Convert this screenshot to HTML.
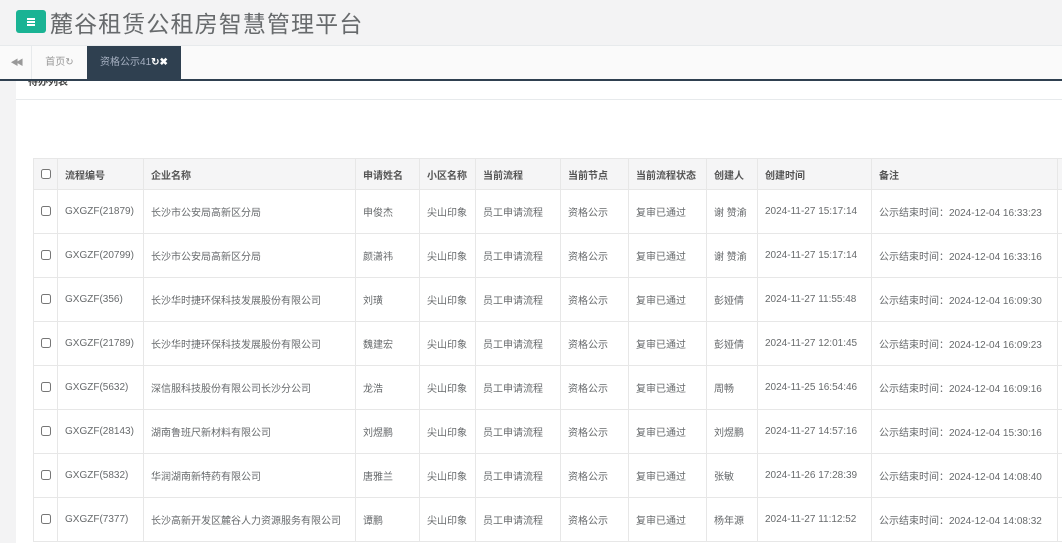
<!DOCTYPE html>
<html><head><meta charset="utf-8"><style>
*{margin:0;padding:0;box-sizing:border-box}
body{width:1062px;height:543px;overflow:hidden;background:#fff;font-family:"Liberation Sans","Noto Sans CJK SC",sans-serif;color:#676a6c;font-size:10px;position:relative}
.hdr{position:absolute;left:0;top:0;width:1062px;height:46px;background:#f3f3f4;border-bottom:1px solid #e7eaec}
.btn{position:absolute;left:16px;top:10px;width:30px;height:23px;background:#1ab394;border-radius:3px}
.btn i{position:absolute;left:11px;width:8px;height:2px;background:#fff}
.title{position:absolute;left:50px;top:5px;font-size:23px;color:#676a6c;letter-spacing:1.1px}
.tabs{position:absolute;left:0;top:46px;width:1062px;height:35px;background:#fafafa;border-bottom:2px solid #2f4050}
.tabs .a{position:absolute;left:0;top:0;width:32px;height:33px;border-right:1px solid #e7eaec;text-align:center;line-height:33px;color:#999;font-size:8px;letter-spacing:-3px}
.tabs .h{position:absolute;left:32px;top:0;width:55px;height:33px;line-height:33px;text-align:center;color:#999;font-size:10px}
.tabs .t{position:absolute;left:87px;top:0;width:94px;height:33px;line-height:33px;text-align:center;background:#2f4050;color:#a7b1c2;font-size:10px}
.left{position:absolute;left:0;top:81px;width:16px;height:462px;background:#f3f3f4}
.sub{position:absolute;left:28px;top:73px;font-size:10px;color:#444;font-weight:bold}
.line{position:absolute;left:16px;top:99px;width:1046px;height:1px;background:#e7eaec}
table{position:absolute;left:33px;top:158px;border-collapse:collapse;table-layout:fixed;width:1040px}
td,th{border:1px solid #e7e7e7;padding:0 7px;text-align:left;white-space:nowrap;overflow:hidden;font-size:10px;vertical-align:middle}
th{background:#f5f5f6;height:31px;color:#555;font-weight:bold}
td{height:44px;color:#676a6c}
input{width:10px;height:10px;margin:0;vertical-align:middle}
</style></head><body>
<div class="hdr"><div class="btn"><i style="top:8px"></i><i style="top:11px"></i><i style="top:14px"></i></div>
<div class="title">麓谷租赁公租房智慧管理平台</div></div>
<div class="tabs"><div class="a">◀◀</div><div class="h">首页↻</div><div class="t">资格公示41<b style="color:#fff">↻✖</b></div></div>
<div class="left"></div>
<div class="sub" style="clip-path:inset(8px 0 0 0)">待办列表</div>
<div class="line"></div>
<table>
<colgroup><col style="width:24px"><col style="width:86px"><col style="width:212px"><col style="width:64px"><col style="width:56px"><col style="width:85px"><col style="width:68px"><col style="width:78px"><col style="width:51px"><col style="width:114px"><col style="width:186px"><col style="width:16px"></colgroup>
<tr><th><input type="checkbox"></th><th>流程编号</th><th>企业名称</th><th>申请姓名</th><th>小区名称</th><th>当前流程</th><th>当前节点</th><th>当前流程状态</th><th>创建人</th><th>创建时间</th><th>备注</th><th></th></tr>
<tr><td><input type="checkbox"></td><td>GXGZF(21879)</td><td>长沙市公安局高新区分局</td><td>申俊杰</td><td>尖山印象</td><td>员工申请流程</td><td>资格公示</td><td>复审已通过</td><td>谢 赞渝</td><td>2024-11-27 15:17:14</td><td>公示结束时间：2024-12-04 16:33:23</td><td></td></tr>
<tr><td><input type="checkbox"></td><td>GXGZF(20799)</td><td>长沙市公安局高新区分局</td><td>颜潇祎</td><td>尖山印象</td><td>员工申请流程</td><td>资格公示</td><td>复审已通过</td><td>谢 赞渝</td><td>2024-11-27 15:17:14</td><td>公示结束时间：2024-12-04 16:33:16</td><td></td></tr>
<tr><td><input type="checkbox"></td><td>GXGZF(356)</td><td>长沙华时捷环保科技发展股份有限公司</td><td>刘璜</td><td>尖山印象</td><td>员工申请流程</td><td>资格公示</td><td>复审已通过</td><td>彭娅倩</td><td>2024-11-27 11:55:48</td><td>公示结束时间：2024-12-04 16:09:30</td><td></td></tr>
<tr><td><input type="checkbox"></td><td>GXGZF(21789)</td><td>长沙华时捷环保科技发展股份有限公司</td><td>魏建宏</td><td>尖山印象</td><td>员工申请流程</td><td>资格公示</td><td>复审已通过</td><td>彭娅倩</td><td>2024-11-27 12:01:45</td><td>公示结束时间：2024-12-04 16:09:23</td><td></td></tr>
<tr><td><input type="checkbox"></td><td>GXGZF(5632)</td><td>深信服科技股份有限公司长沙分公司</td><td>龙浩</td><td>尖山印象</td><td>员工申请流程</td><td>资格公示</td><td>复审已通过</td><td>周畅</td><td>2024-11-25 16:54:46</td><td>公示结束时间：2024-12-04 16:09:16</td><td></td></tr>
<tr><td><input type="checkbox"></td><td>GXGZF(28143)</td><td>湖南鲁班尺新材料有限公司</td><td>刘煜鹏</td><td>尖山印象</td><td>员工申请流程</td><td>资格公示</td><td>复审已通过</td><td>刘煜鹏</td><td>2024-11-27 14:57:16</td><td>公示结束时间：2024-12-04 15:30:16</td><td></td></tr>
<tr><td><input type="checkbox"></td><td>GXGZF(5832)</td><td>华润湖南新特药有限公司</td><td>唐雅兰</td><td>尖山印象</td><td>员工申请流程</td><td>资格公示</td><td>复审已通过</td><td>张敏</td><td>2024-11-26 17:28:39</td><td>公示结束时间：2024-12-04 14:08:40</td><td></td></tr>
<tr><td><input type="checkbox"></td><td>GXGZF(7377)</td><td>长沙高新开发区麓谷人力资源服务有限公司</td><td>谭鹏</td><td>尖山印象</td><td>员工申请流程</td><td>资格公示</td><td>复审已通过</td><td>杨年源</td><td>2024-11-27 11:12:52</td><td>公示结束时间：2024-12-04 14:08:32</td><td></td></tr>
</table>
</body></html>
